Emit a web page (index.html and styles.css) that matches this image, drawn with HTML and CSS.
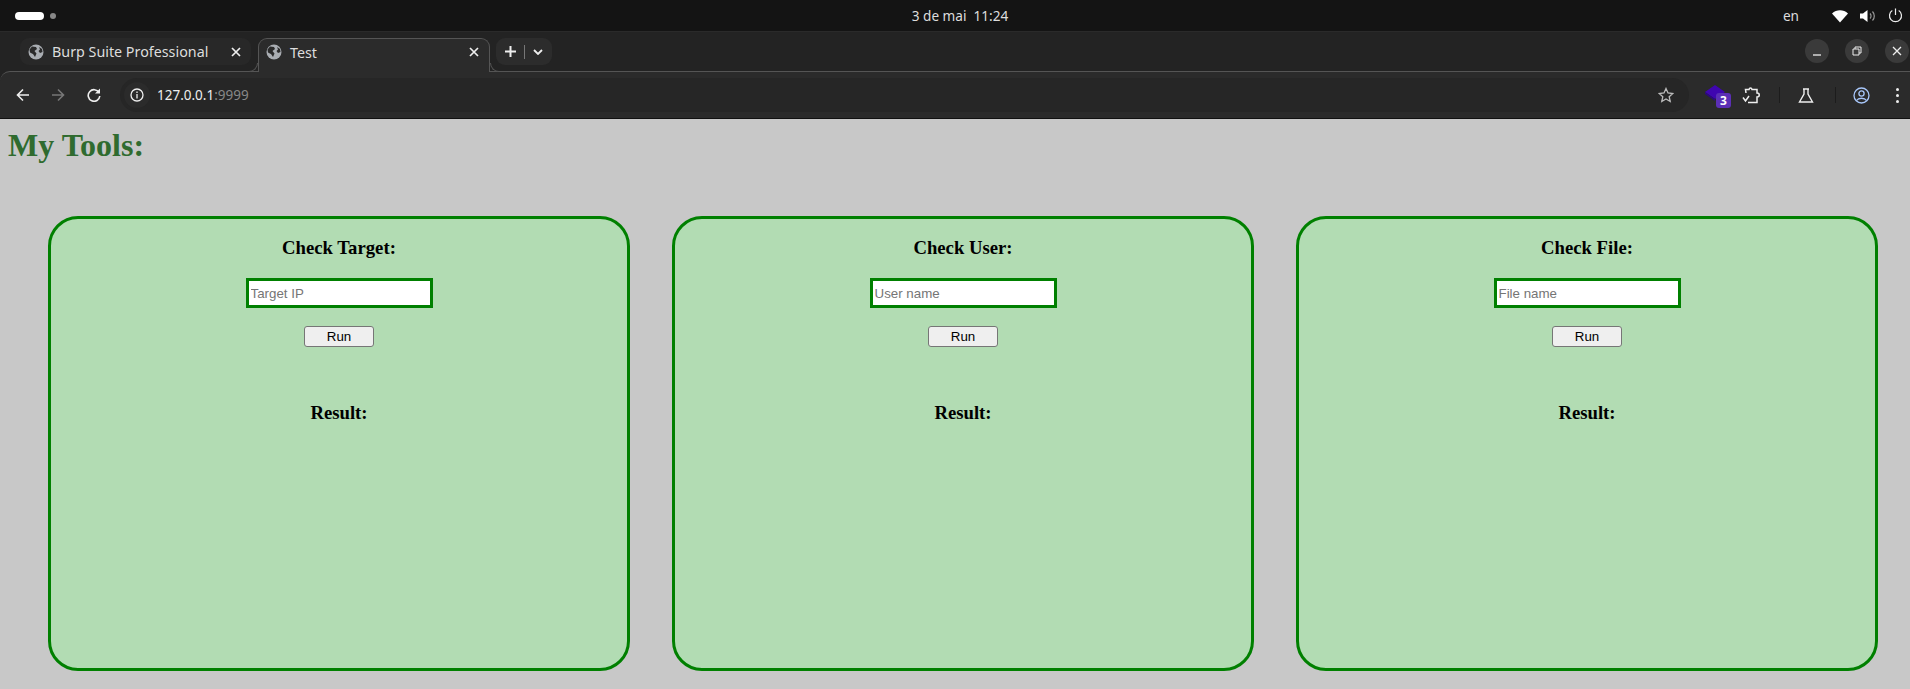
FILE: index.html
```html
<!DOCTYPE html>
<html lang="pt">
<head>
  <meta charset="UTF-8" />
  <title>Test</title>
  <link rel="stylesheet" href="styles.css">
</head>
<body>

  <div class="topbar">
    <div class="workspaces"><span class="ws-pill"></span><span class="ws-dot"></span></div>
    <div class="clock">3 de mai&nbsp;&nbsp;11:24</div>
    <div class="tray">
      <span class="lang">en</span>
      <svg class="tray-wifi" width="16" height="14" viewBox="0 0 16 14"><path d="M0 4.500C4.500 .2 11.500 .2 16 4.500L8 13.500Z" fill="#fff"/></svg>
      <svg class="tray-vol" width="16" height="14" viewBox="0 0 16 14"><path d="M0 4.500h3L7.500 1v12L3 9.500H0Z" fill="#fff"/><path d="M10 4.500a3.500 3.500 0 0 1 0 5M12.500 2.500a6.500 6.500 0 0 1 0 9" fill="none" stroke="#999" stroke-width="1.200"/></svg>
      <svg class="tray-power" width="15" height="15" viewBox="0 0 15 15"><path d="M4.300 2.600a6 6 0 1 0 6.400 0M7.500 .5v6.500" fill="none" stroke="#eee" stroke-width="1.200"/></svg>
    </div>
  </div>

  <div class="chrome">
    <div class="tabstrip">
      <div class="tab">
        <svg class="globe" width="16" height="16" viewBox="0 0 16 16"><circle cx="8" cy="8" r="7.500" fill="#a9adb2"/><path d="M4 2.500l4 .5 1 2-2.500 2 2 2.500-1.500 3.500-2-3-3-1.500-.5-3ZM11 3l3 2 .5 3-2.500 1-1.500-2 1.500-1.500Z" fill="#2a2a2a"/></svg>
        <span class="tab-title">Burp Suite Professional</span>
        <svg class="tab-close" width="10" height="10" viewBox="0 0 10 10"><path d="M1 1l8 8M9 1l-8 8" stroke="#eee" stroke-width="1.700"/></svg>
      </div>
      <div class="tab tab-active">
        <svg class="globe" width="16" height="16" viewBox="0 0 16 16"><circle cx="8" cy="8" r="7.500" fill="#a9adb2"/><path d="M4 2.500l4 .5 1 2-2.500 2 2 2.500-1.500 3.500-2-3-3-1.500-.5-3ZM11 3l3 2 .5 3-2.500 1-1.500-2 1.500-1.500Z" fill="#2a2a2a"/></svg>
        <span class="tab-title">Test</span>
        <svg class="tab-close" width="10" height="10" viewBox="0 0 10 10"><path d="M1 1l8 8M9 1l-8 8" stroke="#eee" stroke-width="1.700"/></svg>
      </div>
      <div class="newtab">
        <svg width="11" height="11" viewBox="0 0 11 11"><path d="M5.500 0v11M0 5.500h11" stroke="#eee" stroke-width="2"/></svg>
        <span class="newtab-sep"></span>
        <svg width="10" height="6" viewBox="0 0 10 6"><path d="M1 1l4 4 4-4" fill="none" stroke="#eee" stroke-width="1.800"/></svg>
      </div>
      <div class="winctl">
        <span class="winbtn"><svg width="10" height="10" viewBox="0 0 10 10"><path d="M1 9h8" stroke="#eee" stroke-width="1.300"/></svg></span>
        <span class="winbtn"><svg width="10" height="10" viewBox="0 0 10 10"><path d="M1 3h6v6H1ZM3 3V1h6v6H7" fill="none" stroke="#eee" stroke-width="1"/></svg></span>
        <span class="winbtn"><svg width="10" height="10" viewBox="0 0 10 10"><path d="M1 1l8 8M9 1l-8 8" stroke="#eee" stroke-width="1.300"/></svg></span>
      </div>
    </div>

    <div class="toolbar">
      <svg class="nav-back" width="14" height="14" viewBox="0 0 14 14"><path d="M13 7H2M7 1.500L1.500 7 7 12.500" fill="none" stroke="#eee" stroke-width="1.600"/></svg>
      <svg class="nav-fwd" width="14" height="14" viewBox="0 0 14 14"><path d="M1 7h11M7 1.500L12.500 7 7 12.500" fill="none" stroke="#777" stroke-width="1.600"/></svg>
      <svg class="nav-reload" width="14" height="14" viewBox="0 0 14 14"><path d="M12 4.500A5.800 5.800 0 1 0 12.800 8" fill="none" stroke="#eee" stroke-width="1.600"/><path d="M13 .5v5H8Z" fill="#eee"/></svg>
      <div class="omnibox">
        <span class="info-chip"><svg width="14" height="14" viewBox="0 0 14 14"><circle cx="7" cy="7" r="6" fill="none" stroke="#eee" stroke-width="1.300"/><path d="M7 6v4.500M7 3.500v1.500" stroke="#eee" stroke-width="1.300"/></svg></span>
        <span class="url">127.0.0.1<span class="url-port">:9999</span></span>
        <svg class="star" width="16" height="16" viewBox="0 0 16 16"><path d="M8 1.500l2 4.500 4.800.5-3.600 3.200 1 4.800L8 12l-4.200 2.500 1-4.800L1.200 6.500 6 6Z" fill="none" stroke="#bbb" stroke-width="1.300"/></svg>
      </div>
      <div class="ext">
        <svg width="20" height="16" viewBox="0 0 20 16"><path d="M10 0l10 7-10 7L0 7Z" fill="#3f06b0"/><path d="M0 7v2l10 7v-2Z" fill="#2c0880"/></svg>
        <span class="ext-badge">3</span>
      </div>
      <svg class="puzzle" width="19" height="17" viewBox="0 0 19 17"><path d="M4 6L3.500 2.500H7C7.500 .5 9.500 .5 10 2.500H15V6C18 6 18 10 15 10V15.500H6M1 10.500L3.500 14 7 9" fill="none" stroke="#eee" stroke-width="1.500"/></svg>
      <span class="tool-sep"></span>
      <svg class="flask" width="16" height="15" viewBox="0 0 16 15"><path d="M5 1h6M6 1v5L1.500 14h13L10 6V1" fill="none" stroke="#eee" stroke-width="1.400"/></svg>
      <span class="tool-sep tool-sep-2"></span>
      <svg class="avatar" width="17" height="17" viewBox="0 0 17 17"><circle cx="8.500" cy="8.500" r="7.500" fill="none" stroke="#a8c7fa" stroke-width="1.300"/><circle cx="8.500" cy="6.500" r="2.600" fill="none" stroke="#a8c7fa" stroke-width="1.300"/><path d="M3.500 13.500c2-3 8-3 10 0" fill="none" stroke="#a8c7fa" stroke-width="1.300"/></svg>
      <span class="kebab"><i></i><i></i><i></i></span>
    </div>
  </div>

  <div class="page">
    <h1>My Tools:</h1>
    <div class="cards">
      <div class="card">
        <h3>Check Target:</h3>
        <input type="text" placeholder="Target IP">
        <button>Run</button>
        <h3 class="result">Result:</h3>
      </div>
      <div class="card">
        <h3>Check User:</h3>
        <input type="text" placeholder="User name">
        <button>Run</button>
        <h3 class="result">Result:</h3>
      </div>
      <div class="card">
        <h3>Check File:</h3>
        <input type="text" placeholder="File name">
        <button>Run</button>
        <h3 class="result">Result:</h3>
      </div>
    </div>
  </div>

</body>
</html>
```
FILE: styles.css
```css
html, body {
  margin: 0;
  height: 689px;
  overflow: hidden;
}
body {
  background: #c8c8c8;
  font-family: "Noto Sans", sans-serif;
}

/* system bar */
.topbar {
  height: 32px;
  background: #141414;
  display: flex;
  align-items: center;
  justify-content: space-between;
  color: #ddd;
  font-size: 13.600px;
  box-sizing: border-box;
  border-bottom: 1px solid #2a2a2a;
}
.workspaces, .tray {
  width: 400px;
  display: flex;
  align-items: center;
  box-sizing: border-box;
}
.workspaces {
  width: 410px;
  padding-left: 15px;
}
.ws-pill {
  width: 29px;
  height: 8px;
  border-radius: 4px;
  background: #fff;
}
.ws-dot {
  width: 6px;
  height: 6px;
  border-radius: 50%;
  background: #888;
  margin-left: 6px;
}
.tray {
  justify-content: flex-end;
  padding-right: 7px;
}
.lang {
  margin-right: 33px;
}
.tray-vol, .tray-power {
  margin-left: 12px;
}

/* tabs */
.chrome {
  background: #232323;
}
.tabstrip {
  height: 39px;
  display: flex;
  align-items: flex-start;
  padding: 6px 0 0 20px;
  box-sizing: border-box;
  color: #ddd;
  font-size: 14.300px;
}
.tab {
  width: 231px;
  height: 27px;
  display: flex;
  align-items: center;
  padding: 0 8px;
  box-sizing: border-box;
  background: #282828;
  border-radius: 9px;
}
.tab-active {
  width: 232px;
  height: 34px;
  margin-left: 7px;
  padding: 0 8px 7px 7px;
  background: #2b2b2b;
  border: 1px solid #555;
  border-bottom: none;
  border-radius: 9px 9px 0 0;
  position: relative;
  z-index: 1;
}
/* the little flares where the active tab meets the toolbar line */
.tab-active::before, .tab-active::after {
  content: "";
  position: absolute;
  bottom: 0;
  width: 9px;
  height: 9px;
  box-sizing: border-box;
  border-bottom: 1px solid #555;
  background: #232323;
}
.tab-active::before {
  left: -10px;
  border-right: 1px solid #555;
  border-bottom-right-radius: 9px;
}
.tab-active::after {
  right: -10px;
  border-left: 1px solid #555;
  border-bottom-left-radius: 9px;
}
.globe {
  flex: none;
  margin-right: 8px;
}
.tab-title {
  flex: 1;
  white-space: nowrap;
}
.tab-close {
  flex: none;
  margin-right: 2px;
}
.newtab {
  width: 56px;
  height: 27px;
  margin-left: 6px;
  padding-right: 1px;
  box-sizing: border-box;
  background: #2c2c2c;
  border-radius: 9px;
  display: flex;
  align-items: center;
  justify-content: center;
  gap: 8px;
}
.newtab-sep {
  width: 1px;
  height: 14px;
  background: #777;
}
.winctl {
  margin-left: auto;
  display: flex;
  gap: 16px;
  padding-right: 1px;
}
.winbtn {
  width: 24px;
  height: 24px;
  border-radius: 50%;
  background: #3a3a3a;
  display: flex;
  align-items: center;
  justify-content: center;
  margin-top: 1px;
}

/* toolbar */
.toolbar {
  height: 48px;
  background: #2b2b2b;
  border-top: 1px solid #555;
  border-bottom: 1px solid #111;
  border-radius: 10px 0 0 0;
  box-sizing: border-box;
  display: flex;
  align-items: center;
  padding-left: 16px;
}
.nav-fwd {
  margin-left: 21px;
}
.nav-reload {
  margin-left: 22px;
}
.omnibox {
  width: 1569px;
  height: 34px;
  margin-left: 19px;
  border-radius: 17px;
  background: #262626;
  display: flex;
  align-items: center;
  padding: 0 15px 0 4px;
  box-sizing: border-box;
  flex: none;
}
.info-chip {
  width: 26px;
  height: 26px;
  border-radius: 50%;
  background: #2b2b2b;
  display: flex;
  align-items: center;
  justify-content: center;
}
.url {
  margin-left: 7px;
  flex: 1;
  font-size: 13.500px;
  color: #eee;
}
.url-port {
  color: #888;
}
.ext {
  position: relative;
  margin-left: 16px;
  width: 20px;
  height: 16px;
  margin-top: -6px;
}
.ext-badge {
  position: absolute;
  left: 11px;
  top: 9px;
  width: 15px;
  height: 15px;
  border-radius: 3px;
  background: #5b2fb5;
  color: #fff;
  font-size: 12px;
  font-weight: bold;
  line-height: 15px;
  text-align: center;
}
.puzzle {
  margin-left: 17px;
}
.tool-sep {
  width: 1px;
  height: 16px;
  background: #1c1c1c;
  margin-left: 18px;
}
.flask {
  margin-left: 18px;
}
.tool-sep-2 {
  margin-left: 21px;
}
.avatar {
  margin-left: 17px;
}
.kebab {
  margin-left: 26px;
  display: flex;
  flex-direction: column;
  gap: 3px;
}
.kebab i {
  width: 3px;
  height: 3px;
  border-radius: 50%;
  background: #eee;
}

/* page content */
.page {
  padding: 8px;
}
h1 {
  margin: 0;
  font-family: "Liberation Serif", serif;
  font-size: 32px;
  color: #2f6b2f;
}
.cards {
  display: flex;
  gap: 42px;
  margin: 52px 0 0 40px;
}
.card {
  width: 582px;
  height: 455px;
  box-sizing: border-box;
  background: #b2dcb3;
  border: 3px solid green;
  border-radius: 30px;
  text-align: center;
  padding-top: 18px;
}
h3 {
  margin: 0;
  font-family: "Liberation Serif", serif;
  font-size: 18.720px;
  color: #000;
}
input {
  display: block;
  width: 187px;
  height: 30px;
  box-sizing: border-box;
  margin: 19px auto 0;
  border: 3px solid green;
  padding: 2px;
  font-family: "Liberation Sans", sans-serif;
  font-size: 13.333px;
  background: #fff;
}
button {
  display: block;
  width: 70px;
  height: 21px;
  margin: 18px auto 0;
  padding: 1px 6px;
  font-family: "Liberation Sans", sans-serif;
  font-size: 13.333px;
  color: #000;
  background: #efefef;
  border: 1px solid #767676;
  border-radius: 3px;
}
.result {
  margin-top: 55px;
}
```
